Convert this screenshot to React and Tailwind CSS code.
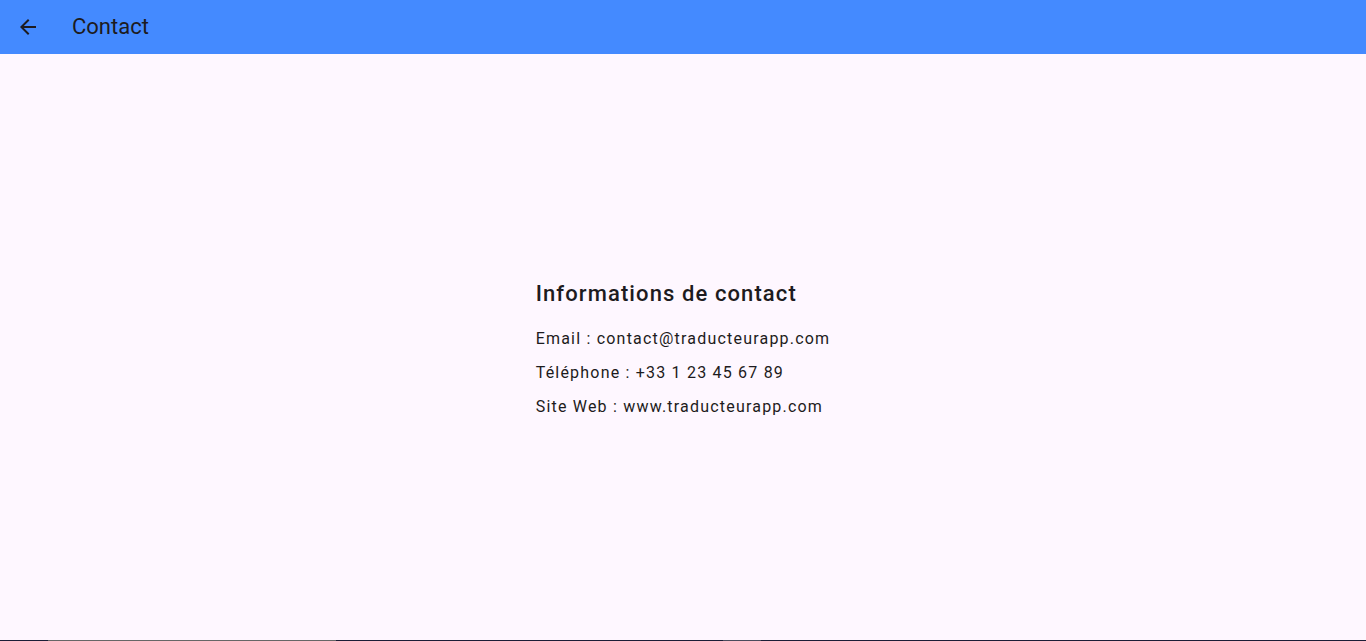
import React from 'react';

const contactLines = [
    'Email : contact@traducteurapp.com',
    'Téléphone : +33 1 23 45 67 89',
    'Site Web : www.traducteurapp.com',
];

const BackArrow = () => (
    <svg viewBox="0 0 24 24" className="w-6 h-6" fill="#1d1b20">
        <path d="M20 11H7.83l5.59-5.59L12 4l-8 8 8 8 1.41-1.41L7.83 13H20v-2z" />
    </svg>
);

export default function App() {
    return (
        <div className="w-[1366px] h-[641px] flex flex-col bg-[#fef7ff] overflow-hidden" style={{ fontFamily: 'Roboto, "Noto Sans", sans-serif' }}>
            {/* App bar */}
            <header className="h-[54px] shrink-0 bg-[#448aff] flex items-center pl-4">
                <button className="w-6 h-6 flex items-center justify-center">
                    <BackArrow />
                </button>
                <h1 className="ml-8 text-[22px] leading-[28px] text-[#1d1b20]">Contact</h1>
            </header>

            {/* Body */}
            <main className="flex-1 flex items-center justify-center pt-[10px]">
                <div className="flex flex-col items-start">
                    <h2 className="text-[22px] leading-[28px] font-medium tracking-[1.1px] text-[#1d1b20]">Informations de contact</h2>
                    <div className="mt-[14px] flex flex-col">
                        {contactLines.map(line => (
                            <p key={line} className="py-[5px] text-base leading-6 tracking-[1.2px] text-[#1d1b20]">{line}</p>
                        ))}
                    </div>
                </div>
            </main>

            {/* Bottom edge strip */}
            <div className="h-px shrink-0 flex">
                <div className="w-[48px] bg-[#1b1d36]" />
                <div className="w-[288px] bg-[#666666]" />
                <div className="w-[387px] bg-[#1b1d36]" />
                <div className="w-[38px] bg-[#4b4b5c]" />
                <div className="flex-1 bg-[#1b1d36]" />
            </div>
        </div>
    );
}
